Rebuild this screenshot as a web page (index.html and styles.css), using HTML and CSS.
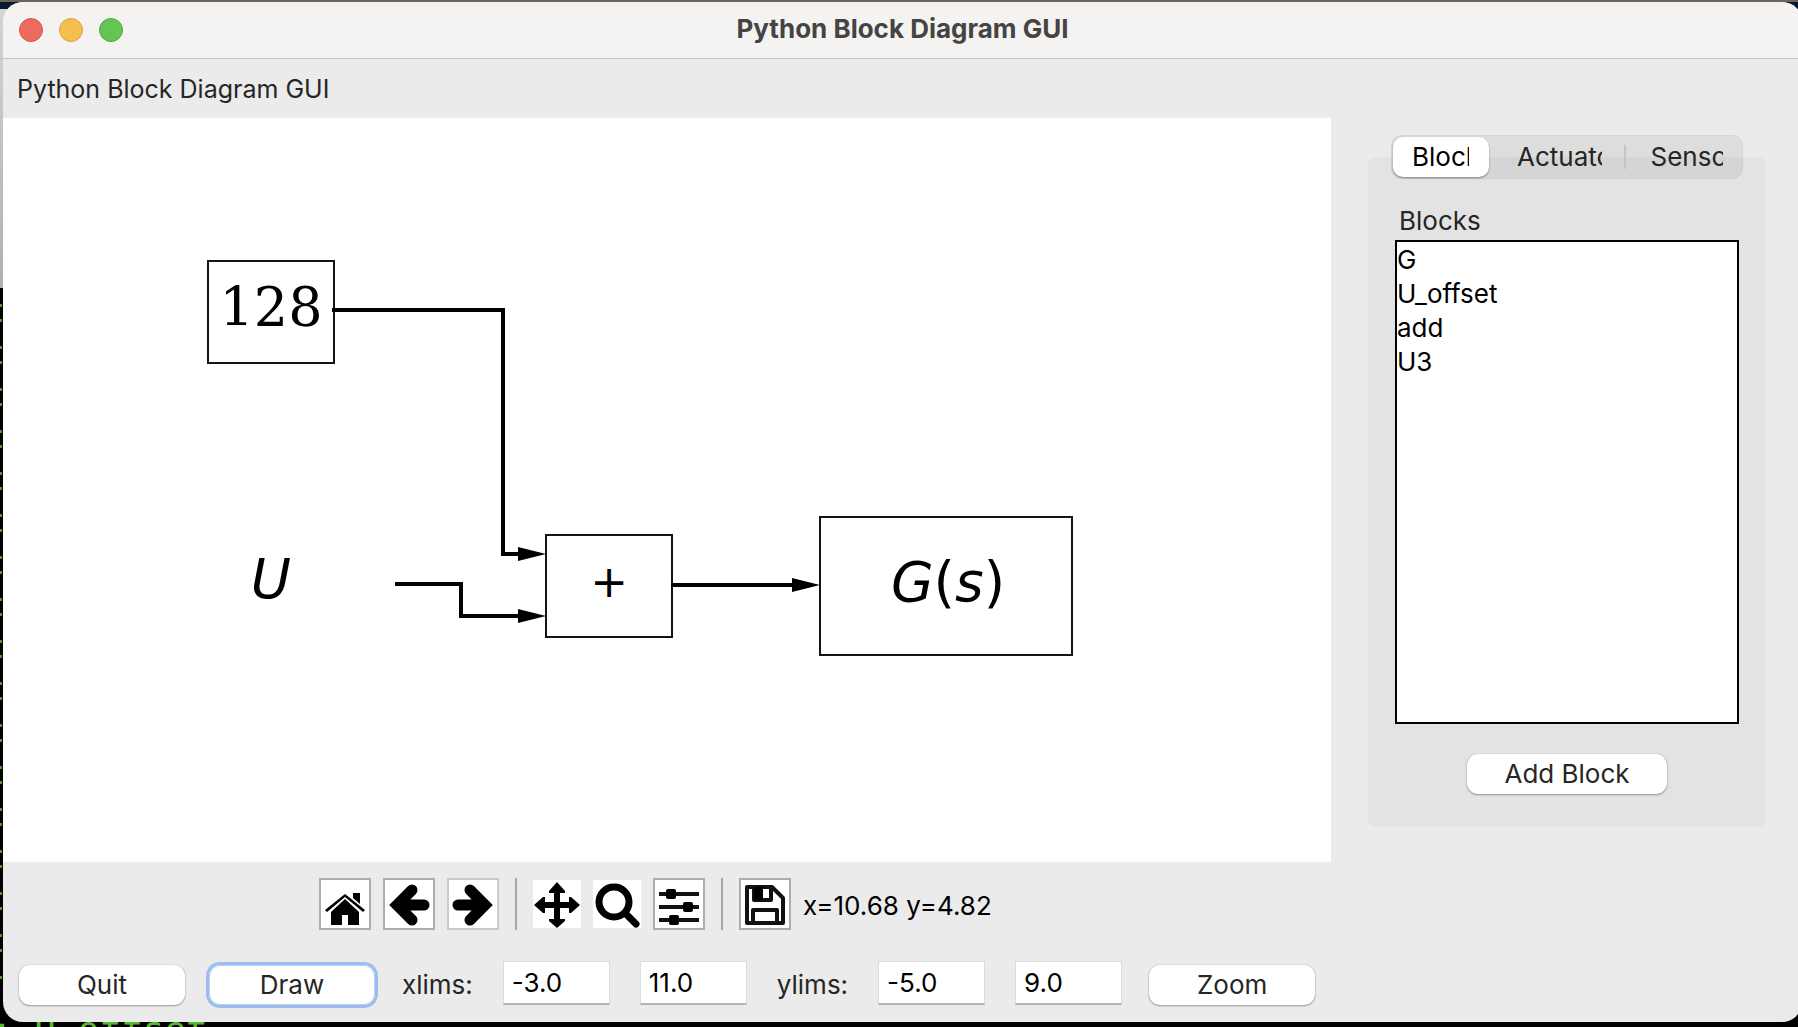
FILE: index.html
```html
<!DOCTYPE html>
<html lang="en">
<head>
<meta charset="utf-8">
<title>Python Block Diagram GUI</title>
<link rel="stylesheet" href="styles.css">
</head>
<body>
<div class="terminal-edge" aria-hidden="true"></div>
<div class="terminal-line" aria-hidden="true">: U_offset</div>
<div class="window">
  <header class="titlebar">
    <div class="lights">
      <button class="light light-close" aria-label="Close"></button>
      <button class="light light-min" aria-label="Minimize"></button>
      <button class="light light-max" aria-label="Maximize"></button>
    </div>
    <h1 class="title">Python Block Diagram GUI</h1>
  </header>
  <p class="heading">Python Block Diagram GUI</p>
  <main class="content">
    <section class="plot">
      <svg class="canvas" viewBox="3 118 1328 744" role="img" aria-label="Block diagram">
        <g class="block">
          <rect x="208" y="261" width="126" height="102"/>
          <rect x="546" y="535" width="126" height="102"/>
          <rect x="820" y="517" width="252" height="138"/>
        </g>
        <g class="wire">
          <path d="M332 310H503V554H524"/>
          <path d="M395 584H461V616H524"/>
          <path d="M671 585H796"/>
        </g>
        <g class="arrow">
          <path d="M518 547L546 554L518 561Z"/>
          <path d="M518 609L546 616L518 623Z"/>
          <path d="M792 578L820 585L792 592Z"/>
        </g>
        <text class="label label-serif" x="271" y="326">128</text>
        <text class="label label-var" x="271" y="598">U</text>
        <text class="label label-sign" x="609" y="597">+</text>
        <text class="label" x="948" y="601"><tspan class="label-var">G</tspan>(<tspan class="label-var">s</tspan>)</text>
      </svg>
      <div class="toolbar">
        <button class="tool" aria-label="Home"><svg viewBox="0 0 48 48"><path d="M10 32V45H21V35H27V45H38V32L24 19Z"/><path d="M4 30L24 14L44 30L42 32L24 17L6 32Z"/><path d="M32 13H39V24L32 18Z"/></svg></button>
        <button class="tool" aria-label="Back"><svg viewBox="0 0 48 48"><path class="thick" d="M39 25H12M27 10L12 25L27 40"/></svg></button>
        <button class="tool tool-dim" aria-label="Forward"><svg viewBox="0 0 48 48"><path class="thick" d="M9 25H36M21 10L36 25L21 40"/></svg></button>
        <span class="sep"></span>
        <button class="tool tool-flat" aria-label="Pan"><svg viewBox="0 0 48 48"><path d="M24 2L32 11V13H27V22H36V17H38L47 25L38 33H36V28H27V39H32V41L24 48L16 41V39H21V28H12V33H10L1 25L10 17H12V22H21V13H16V11Z"/></svg></button>
        <button class="tool tool-flat" aria-label="Zoom to rectangle"><svg viewBox="0 0 48 48"><circle class="ring" cx="21" cy="22" r="15"/><path class="handle" d="M32 33L43 44"/></svg></button>
        <button class="tool" aria-label="Configure subplots"><svg viewBox="0 0 48 48"><path class="bar" d="M4 14H44M4 27H44M4 40H44"/><rect x="11" y="9" width="10" height="10" rx="2"/><rect x="28" y="22" width="10" height="10" rx="2"/><rect x="14" y="35" width="10" height="10" rx="2"/></svg></button>
        <span class="sep"></span>
        <button class="tool" aria-label="Save the figure"><svg viewBox="0 0 48 48"><path class="bar" d="M6 7H31L42 18V43H6Z"/><path class="bar" d="M12 43V30H36V43M13 7V20H30V7"/><path d="M13 7H22V20H13Z"/></svg></button>
        <output class="coords">x=10.68 y=4.82</output>
      </div>
      <form class="controls">
        <button type="button" class="push">Quit</button>
        <button type="button" class="push push-focus">Draw</button>
        <label class="lims" for="xmin">xlims:</label>
        <input class="field" id="xmin" value="-3.0">
        <input class="field" aria-label="x maximum" value="11.0">
        <label class="lims" for="ymin">ylims:</label>
        <input class="field" id="ymin" value="-5.0">
        <input class="field" aria-label="y maximum" value="9.0">
        <button type="button" class="push">Zoom</button>
      </form>
    </section>
    <aside class="side">
      <div class="tabs" role="tablist">
        <button class="tab tab-on" role="tab" aria-selected="true"><span class="tab-text">Blocks</span></button>
        <button class="tab" role="tab" aria-selected="false"><span class="tab-text">Actuators</span></button>
        <span class="tab-sep"></span>
        <button class="tab tab-last" role="tab" aria-selected="false"><span class="tab-text">Sensors</span></button>
      </div>
      <div class="panel">
        <label class="list-label" for="blocks">Blocks</label>
        <select class="list" id="blocks" size="14">
          <option>G</option>
          <option>U_offset</option>
          <option>add</option>
          <option>U3</option>
        </select>
        <button class="push push-wide">Add Block</button>
      </div>
    </aside>
  </main>
</div>
</body>
</html>
```
FILE: styles.css
```css
* { box-sizing: border-box; }
html { height: 100%; }
body {
  position: relative;
  margin: 0;
  min-height: 100%;
  padding: 2px 0 5px 3px;
  overflow: hidden;
  background: linear-gradient(#6d6459 0 2px, #0b1930 2px 9px, #d4d4d4 9px, #b0b0b0 288px, #000 288px);
  font-family: Inter, "Liberation Sans", sans-serif;
  font-size: 26px;
  line-height: 34px;
  color: #262626;
}
button, input, select { font: inherit; color: inherit; margin: 0; border: 0; }
.terminal-edge {
  position: absolute;
  left: 0;
  top: 304px;
  bottom: 40px;
  width: 2px;
  background: repeating-linear-gradient(#4a9d2c 0 3px, #000 3px 15px, #4a9d2c 15px 18px, #000 18px 42px);
}
.terminal-line {
  position: absolute;
  left: -9px;
  bottom: 0;
  height: 18px;
  overflow: hidden;
  color: #56b932;
  font-family: "DejaVu Sans Mono", monospace;
  font-size: 36px;
  line-height: 42px;
  white-space: pre;
}
.window {
  position: relative;
  min-height: 1020px;
  margin-right: -4px;
  border-radius: 20px;
  overflow: hidden;
  background: #ebebeb;
}
.titlebar {
  display: grid;
  grid-template-columns: 1fr auto 1fr;
  align-items: center;
  height: 57px;
  padding: 0 16px;
  background: #f4f3f1;
  border-bottom: 1px solid #c3c3c3;
}
.lights { display: flex; gap: 16px; }
.light { width: 24px; height: 24px; padding: 0; border-radius: 50%; }
.light-close { background: #ed6a5e; border: 1px solid #d8544b; }
.light-min { background: #f5bf4f; border: 1px solid #d9a33b; }
.light-max { background: #62c554; border: 1px solid #4fa93f; }
.title { margin: 0; padding-bottom: 2px; font-size: 26px; line-height: 34px; font-weight: 700; color: #454443; }
.heading { margin: 0; padding: 13px 14px 12px; font-size: 25px; }
.content { display: grid; grid-template-columns: minmax(0, 1fr) 471px; align-items: start; }
.canvas { display: block; width: 100%; background: #fff; }
.block rect { fill: #fff; stroke: #141414; stroke-width: 2px; }
.wire path { fill: none; stroke: #000; stroke-width: 4px; }
.label { font-family: "DejaVu Sans", sans-serif; font-size: 55px; text-anchor: middle; fill: #000; }
.label-serif { font-family: "DejaVu Serif", serif; font-size: 54px; }
.label-var { font-style: italic; }
.label-sign { font-size: 45px; }
.toolbar {
  display: flex;
  align-items: center;
  gap: 12px;
  padding: 16px 0 0 316px;
}
.tool { width: 52px; height: 52px; padding: 0; background: #fff; border: 2px solid #adadad; }
.tool svg { display: block; width: 48px; height: 48px; }
.tool-dim { border-color: #cacaca; }
.tool-flat { width: 48px; height: 48px; border: 0; }
.sep { width: 2px; height: 52px; margin: 0 4px; background: #a8a8a8; }
.thick { fill: none; stroke: #000; stroke-width: 11px; stroke-linecap: round; }
.ring { fill: none; stroke: #000; stroke-width: 7px; }
.handle { stroke: #000; stroke-width: 7px; stroke-linecap: round; }
.bar { fill: none; stroke: #111; stroke-width: 4px; stroke-linejoin: round; }
.coords { padding-top: 4px; color: #000; }
.controls { display: flex; align-items: flex-end; gap: 24px; padding: 31px 16px 16px; }
.push {
  flex: none;
  width: 166px;
  height: 40px;
  padding: 0;
  line-height: 38px;
  border-radius: 11px;
  background: #fff;
  box-shadow: 0 1px 2px rgba(0, 0, 0, .35), 0 0 1px rgba(0, 0, 0, .3);
}
.push-focus { box-shadow: 0 0 0 3px #9dbdec, inset 0 0 0 1px #b9d0f0; }
.push-wide { width: 200px; }
.lims { padding: 0 3px; line-height: 40px; }
.field {
  width: 107px;
  height: 44px;
  margin: 0 3px;
  padding: 0 8px;
  color: #000;
  background: #fff;
  border: 1px solid #dcdcdc;
  border-bottom: 2px solid #b4b4b4;
}
.side { padding: 17px 36px 0 37px; }
.tabs {
  position: relative;
  display: flex;
  align-items: center;
  height: 44px;
  margin: 0 23px;
  padding: 2px;
  border-radius: 11px;
  background: rgba(0, 0, 0, .06);
  box-shadow: inset 0 0 0 1px rgba(0, 0, 0, .03);
}
.tab { flex: 1 1 136px; min-width: 0; height: 40px; padding: 0 22px 0 28px; border-radius: 10px; background: none; }
.tab-on { flex: 0 0 96px; padding: 0 20px 0 19px; background: #fff; color: #000; box-shadow: 0 1px 2px rgba(0, 0, 0, .4); }
.tab-last { flex-basis: 115px; padding: 0 18px 0 24px; }
.tab-sep { width: 2px; height: 24px; background: #c6c6c6; }
.tab-text { display: block; overflow: hidden; white-space: nowrap; text-align: left; }
.panel {
  display: flex;
  flex-direction: column;
  align-items: center;
  margin-top: -22px;
  padding: 47px 27px 33px;
  border-radius: 8px;
  background: #e3e3e3;
}
.list-label { align-self: stretch; padding-left: 4px; }
.list {
  width: 100%;
  height: 484px;
  margin: 2px 0 30px;
  padding: 2px 0 0;
  border: 2px solid #000;
  border-radius: 0;
  background: #fff;
  color: #000;
  overflow: hidden;
  outline: 0;
  font-variant-ligatures: none;
}
.list option { padding: 0; min-height: 34px; line-height: 34px; }
```
